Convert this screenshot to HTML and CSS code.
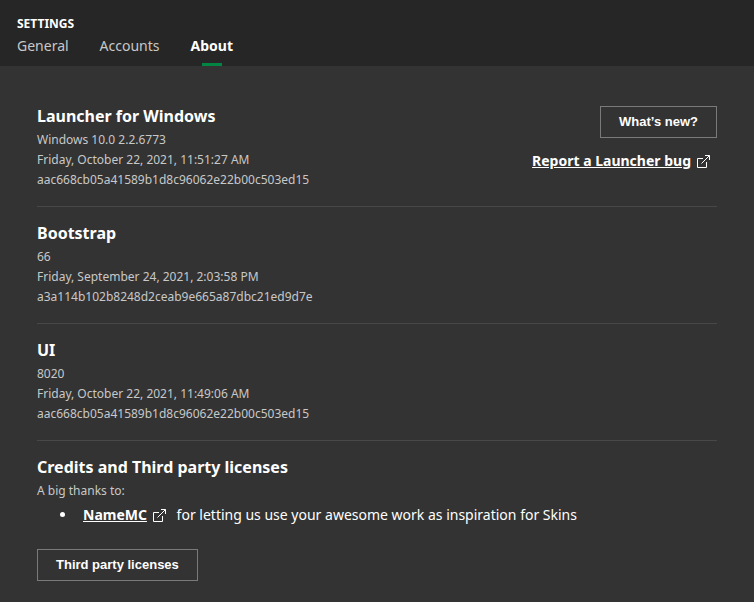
FILE: index.html
```html
<!DOCTYPE html>
<html lang="en">
<head>
<meta charset="utf-8">
<title>Settings</title>
<link rel="stylesheet" href="styles.css">
</head>
<body>
<header class="header">
  <h1 class="header-title">SETTINGS</h1>
  <nav class="tabs">
    <a class="tab" href="#general">General</a>
    <a class="tab" href="#accounts">Accounts</a>
    <a class="tab tab-active" href="#about" aria-current="page">About</a>
  </nav>
</header>
<main class="content">
  <section class="section section-split">
    <div>
      <h2 class="section-title">Launcher for Windows</h2>
      <p class="detail">Windows 10.0 2.2.6773</p>
      <p class="detail">Friday, October 22, 2021, 11:51:27 AM</p>
      <p class="detail">aac668cb05a41589b1d8c96062e22b00c503ed15</p>
    </div>
    <div class="actions">
      <button class="button" type="button">What’s new?</button>
      <a class="link" href="#report"><span class="link-text">Report a Launcher bug</span>
        <svg class="link-icon" viewBox="0 0 13 13" aria-hidden="true"><path d="M6 3.5H.5v9h9V7M8 .5h4.5V5M12.5 .5L4.5 8.5"/></svg></a>
    </div>
  </section>
  <section class="section">
    <h2 class="section-title">Bootstrap</h2>
    <p class="detail">66</p>
    <p class="detail">Friday, September 24, 2021, 2:03:58 PM</p>
    <p class="detail">a3a114b102b8248d2ceab9e665a87dbc21ed9d7e</p>
  </section>
  <section class="section">
    <h2 class="section-title">UI</h2>
    <p class="detail">8020</p>
    <p class="detail">Friday, October 22, 2021, 11:49:06 AM</p>
    <p class="detail">aac668cb05a41589b1d8c96062e22b00c503ed15</p>
  </section>
  <section class="section">
    <h2 class="section-title">Credits and Third party licenses</h2>
    <p class="detail">A big thanks to:</p>
    <ul class="credits">
      <li class="credit"><a class="link" href="#namemc"><span class="link-text">NameMC</span>
        <svg class="link-icon" viewBox="0 0 13 13" aria-hidden="true"><path d="M6 3.5H.5v9h9V7M8 .5h4.5V5M12.5 .5L4.5 8.5"/></svg></a>
        for letting us use your awesome work as inspiration for Skins</li>
    </ul>
    <button class="button" type="button">Third party licenses</button>
  </section>
</main>
</body>
</html>
```
FILE: styles.css
```css
* {
  box-sizing: border-box;
}

body {
  margin: 0;
  background: #333;
  color: #fff;
  font: 14px/20px "Noto Sans", sans-serif;
}

h1, h2, p, ul {
  margin: 0;
}

.header {
  padding: 14px 17px 0;
  background: #262626;
}

.header-title {
  font-size: 12px;
  line-height: 20px;
}

.tabs {
  display: flex;
  gap: 31px;
}

.tab {
  position: relative;
  height: 32px;
  padding-top: 2px;
  color: #c8c8c8;
  text-decoration: none;
}

.tab-active {
  color: #fff;
  font-weight: 700;
}

.tab-active::after {
  content: "";
  position: absolute;
  bottom: 0;
  left: 50%;
  width: 20px;
  height: 3px;
  margin-left: -10px;
  background: #008542;
}

.content {
  padding: 40px 37px 20px;
}

.section + .section {
  margin-top: 16px;
  padding-top: 16px;
  border-top: 1px solid #484848;
}

.section-split {
  display: flex;
  justify-content: space-between;
}

.section-title {
  margin-bottom: 4px;
  font-size: 16px;
  line-height: 20px;
}

.detail {
  color: #c8c8c8;
  font-size: 12px;
  line-height: 20px;
}

.actions {
  display: flex;
  flex-direction: column;
  align-items: flex-end;
  gap: 13px;
}

.button {
  height: 32px;
  padding: 0 18px;
  border: 1px solid #7a7a7a;
  background: transparent;
  color: #fff;
  font: 700 13px/20px "Liberation Sans", sans-serif;
}

.link {
  display: inline-flex;
  align-items: center;
  gap: 6px;
  padding-right: 7px;
  color: #fff;
  font-weight: 700;
  text-decoration: none;
}

.link-text {
  text-decoration: underline;
}

.link-icon {
  width: 13px;
  height: 13px;
  fill: none;
  stroke: #fff;
}

.credits {
  margin: 4px 0 24px;
  padding-left: 40px;
}

.credit {
  padding-left: 6px;
}
```
